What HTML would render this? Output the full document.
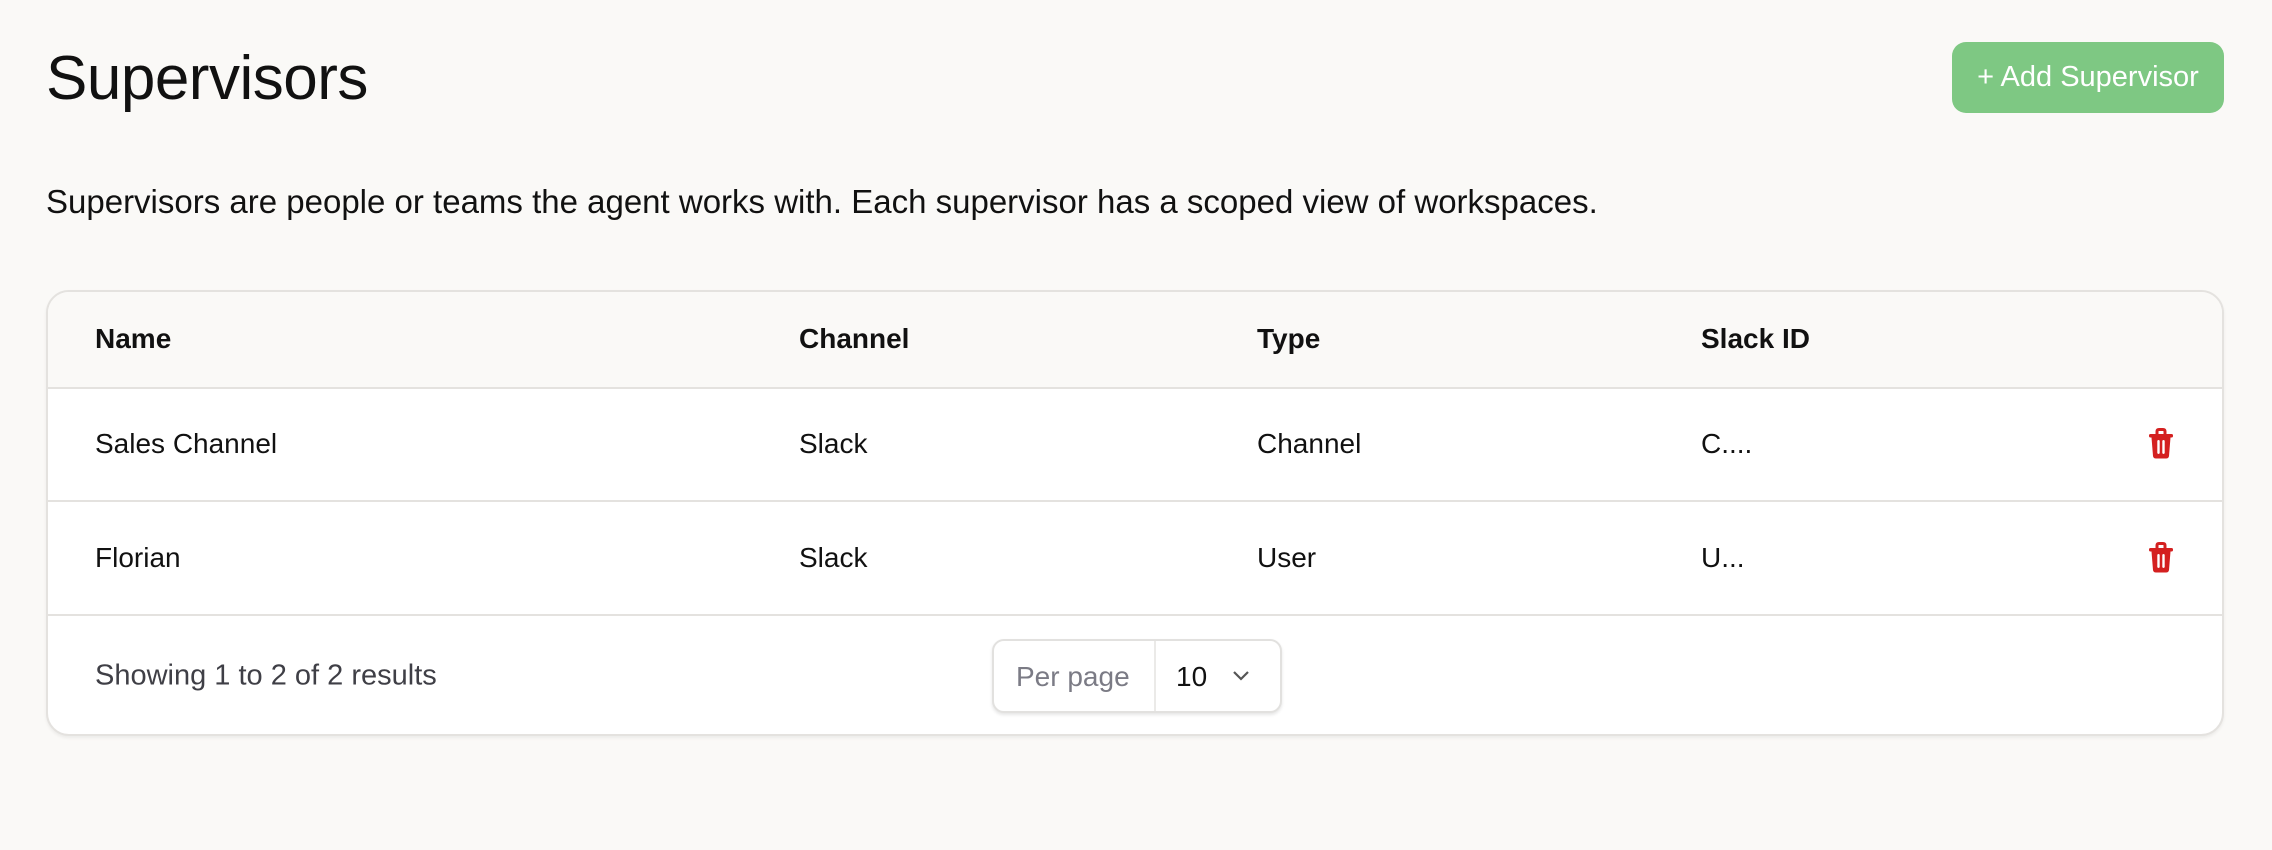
<!DOCTYPE html>
<html><head><meta charset="utf-8"><style>
*{box-sizing:border-box;margin:0;padding:0}
body{width:2272px;height:850px;background:#faf9f7;font-family:"Liberation Sans",sans-serif;color:#111;position:relative;overflow:hidden}
.abs{position:absolute}
h1{position:absolute;left:46px;top:43px;font-size:62px;font-weight:400;letter-spacing:-0.5px;font-family:"Liberation Sans",sans-serif}
.btn{left:1952px;top:42px;width:272px;height:71px;background:#7ec883;border-radius:14px;color:#fff;font-size:29px;display:flex;align-items:center;justify-content:center}
.desc{left:46px;top:183px;font-size:33px;white-space:nowrap}
.card{left:46px;top:290px;width:2178px;height:446px;border:2px solid #e4e2df;border-radius:23px;background:#fff;overflow:hidden;box-shadow:0 2px 3px rgba(0,0,0,.06)}
.hd{position:absolute;left:0;top:0;width:100%;height:97px;background:#faf9f7;border-bottom:2px solid #e4e2df}
.row{position:absolute;left:0;width:100%;height:113px;border-bottom:2px solid #e4e2df}
.c{position:absolute;font-size:28px;white-space:nowrap;transform:translateY(-50%)}
.b{font-weight:700}
.sel{left:944px;top:347px;width:290px;height:74px;border:2px solid #e2e1df;border-radius:12px;box-shadow:0 2px 3px rgba(0,0,0,.1);background:#fff}
</style></head><body>
<h1>Supervisors</h1>
<div class="abs btn">+ Add Supervisor</div>
<div class="abs desc">Supervisors are people or teams the agent works with. Each supervisor has a scoped view of workspaces.</div>
<div class="abs card">
 <div class="hd">
  <div class="c b" style="left:47px;top:47px">Name</div>
  <div class="c b" style="left:751px;top:47px">Channel</div>
  <div class="c b" style="left:1209px;top:47px">Type</div>
  <div class="c b" style="left:1653px;top:47px">Slack ID</div>
 </div>
 <div class="row" style="top:97px">
  <div class="c" style="left:47px;top:55px">Sales Channel</div>
  <div class="c" style="left:751px;top:55px">Slack</div>
  <div class="c" style="left:1209px;top:55px">Channel</div>
  <div class="c" style="left:1653px;top:55px">C....</div>
  <svg class="abs" style="left:2100px;top:39px" width="26" height="32" viewBox="0 0 26 32"><path d="M9 6V3.5Q9 1.5 11 1.5H15Q17 1.5 17 3.5V6" fill="none" stroke="#d42020" stroke-width="3"/><rect x="1" y="6" width="24" height="3.5" rx="1.5" fill="#d42020"/><path d="M3.5 9.5H22.5L21 28Q20.7 30.5 18 30.5H8Q5.3 30.5 5 28Z" fill="#d42020"/><rect x="9.3" y="12" width="2.4" height="14" rx="1.2" fill="#fff"/><rect x="14.3" y="12" width="2.4" height="14" rx="1.2" fill="#fff"/></svg>
 </div>
 <div class="row" style="top:211px">
  <div class="c" style="left:47px;top:55px">Florian</div>
  <div class="c" style="left:751px;top:55px">Slack</div>
  <div class="c" style="left:1209px;top:55px">User</div>
  <div class="c" style="left:1653px;top:55px">U...</div>
  <svg class="abs" style="left:2100px;top:39px" width="26" height="32" viewBox="0 0 26 32"><path d="M9 6V3.5Q9 1.5 11 1.5H15Q17 1.5 17 3.5V6" fill="none" stroke="#d42020" stroke-width="3"/><rect x="1" y="6" width="24" height="3.5" rx="1.5" fill="#d42020"/><path d="M3.5 9.5H22.5L21 28Q20.7 30.5 18 30.5H8Q5.3 30.5 5 28Z" fill="#d42020"/><rect x="9.3" y="12" width="2.4" height="14" rx="1.2" fill="#fff"/><rect x="14.3" y="12" width="2.4" height="14" rx="1.2" fill="#fff"/></svg>
 </div>
 <div class="c" style="left:47px;top:384px;color:#3f3f46;font-size:29px">Showing 1 to 2 of 2 results</div>
 <div class="abs sel">
  <div class="c" style="left:22px;top:36px;color:#7b7b85">Per page</div>
  <div class="abs" style="left:160px;top:0;width:2px;height:70px;background:#ebeae8"></div>
  <div class="c" style="left:182px;top:36px">10</div>
  <svg class="abs" style="left:238px;top:29px" width="18" height="12" viewBox="0 0 18 12"><path d="M2 2L9 9L16 2" fill="none" stroke="#555" stroke-width="2.2"/></svg>
 </div>
</div>
</body></html>
